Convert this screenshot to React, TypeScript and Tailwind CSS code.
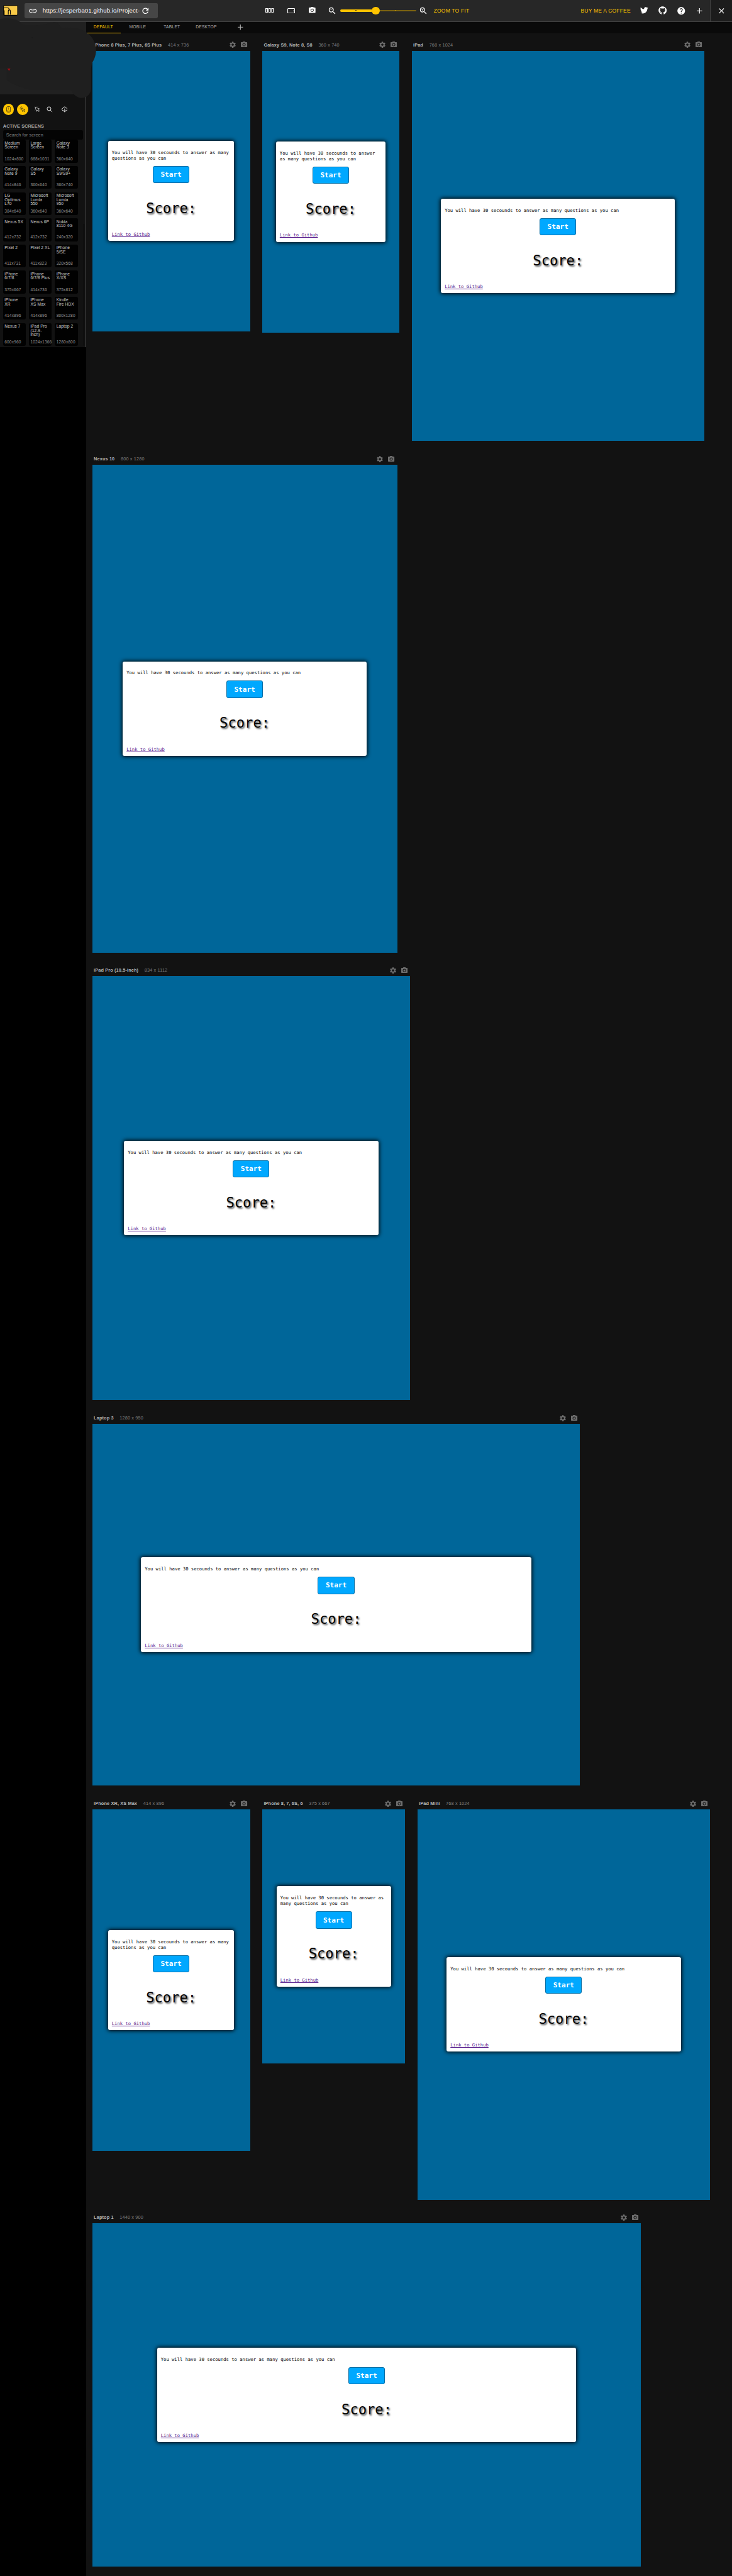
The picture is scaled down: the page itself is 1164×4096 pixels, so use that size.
import React from "react";
import { MdAdd, MdCameraAlt, MdClose, MdHelp, MdLink, MdRefresh, MdSettings, MdZoomIn, MdZoomOut } from "react-icons/md";
import { FaGithub, FaTwitter } from "react-icons/fa";

type Device = { name: string; w: number; h: number };

const DEVICE_ROWS: Device[][] = [
  [
    { name: "iPhone 8 Plus, 7 Plus, 6S Plus", w: 414, h: 736 },
    { name: "Galaxy S9, Note 8, S8", w: 360, h: 740 },
    { name: "iPad", w: 768, h: 1024 },
  ],
  [{ name: "Nexus 10", w: 800, h: 1280 }],
  [{ name: "iPad Pro (10.5-inch)", w: 834, h: 1112 }],
  [{ name: "Laptop 3", w: 1280, h: 950 }],
  [
    { name: "iPhone XR, XS Max", w: 414, h: 896 },
    { name: "iPhone 8, 7, 6S, 6", w: 375, h: 667 },
    { name: "iPad Mini", w: 768, h: 1024 },
  ],
  [{ name: "Laptop 1", w: 1440, h: 900 }],
];

const SCREENS: [string, string][] = [
  ["Medium Screen", "1024x800"],
  ["Large Screen", "688x1031"],
  ["Galaxy Note 3", "360x640"],
  ["Galaxy Note 9", "414x846"],
  ["Galaxy S5", "360x640"],
  ["Galaxy S9/S9+", "360x740"],
  ["LG Optimus L70", "384x640"],
  ["Microsoft Lumia 550", "360x640"],
  ["Microsoft Lumia 950", "360x640"],
  ["Nexus 5X", "412x732"],
  ["Nexus 6P", "412x732"],
  ["Nokia 8110 4G", "240x320"],
  ["Pixel 2", "411x731"],
  ["Pixel 2 XL", "411x823"],
  ["iPhone 5/SE", "320x568"],
  ["iPhone 6/7/8", "375x667"],
  ["iPhone 6/7/8 Plus", "414x736"],
  ["iPhone X/XS", "375x812"],
  ["iPhone XR", "414x896"],
  ["iPhone XS Max", "414x896"],
  ["Kindle Fire HDX", "800x1280"],
  ["Nexus 7", "600x960"],
  ["iPad Pro (12.9-inch)", "1024x1366"],
  ["Laptop 2", "1280x800"],
];

const TABS = ["DEFAULT", "MOBILE", "TABLET", "DESKTOP"];

const units = (n: number) => `calc(var(--spacing) * ${n})`;

function Logo() {
  return (
    <svg viewBox="0 0 39 28" preserveAspectRatio="none" className="ml-8 h-28 w-39 shrink-0" fill="none">
      <rect x="1" y="1" width="37" height="26" rx="2.500" fill="#f8c947" stroke="#0a0a0a" strokeWidth="2" />
      <path d="M2 7.500h10c2.500 0 3.500 1 3.500 4" stroke="#0a0a0a" strokeWidth="1.700" />
      <path d="M3 27V14" stroke="#0a0a0a" strokeWidth="1.700" />
      <path d="M13.500 25v-8c0-3 1-4.500 2.700-4.500s2.800 1.500 2.800 4.500v8" stroke="#0a0a0a" strokeWidth="1.900" />
    </svg>
  );
}

function Header() {
  return (
    <header className="flex h-57 shrink-0 items-center border-b border-[#434343] bg-[#272727] text-white">
      <Logo />
      <div className="ml-17 flex h-40 w-350 shrink-0 items-center rounded-[2.400px] bg-[#464646] pl-11">
        <MdLink className="size-24 shrink-0" />
        <span className="ml-13 w-257 text-[9.600px] tracking-[0.009em] whitespace-nowrap">
          https://jesperba01.github.io/Project-
        </span>
        <MdRefresh className="ml-1 size-24 shrink-0" />
      </div>
      <div className="ml-266 flex h-full items-center">
        <span className="flex w-56 justify-center">
          <svg viewBox="0 0 22 12" className="h-12 w-22" fill="none" stroke="currentColor" strokeWidth="2">
            <rect x="1" y="1" width="4.500" height="10" />
            <rect x="8.750" y="1" width="4.500" height="10" />
            <rect x="16.500" y="1" width="4.500" height="10" />
          </svg>
        </span>
        <span className="flex w-56 justify-center">
          <svg viewBox="0 0 20 14" className="h-14 w-20" fill="none" stroke="currentColor" strokeWidth="1.800">
            <rect x="0.900" y="0.900" width="18.200" height="12.200" rx="1.500" />
            <path d="M15 7h1.800" />
          </svg>
        </span>
        <span className="flex w-54 justify-center">
          <MdCameraAlt className="size-21" />
        </span>
        <MdZoomOut className="ml-14 size-24" />
        <div className="ml-8 flex w-200 items-center">
          <div className="flex h-6 w-84 items-center rounded-l-full bg-[#ffc400] pl-41">
            <span className="size-2 bg-[#5c4a10]" />
          </div>
          <span className="size-20 rounded-full bg-[#ffc400]" />
          <div className="flex h-4 w-96 items-center rounded-r-full bg-[#7c6311] pl-42">
            <span className="size-2 bg-[#ffc400]" />
          </div>
        </div>
        <MdZoomIn className="ml-7 size-24" />
        <span className="ml-15 text-[8.480px] tracking-[0.026em] whitespace-nowrap text-[#ffc400]">ZOOM TO FIT</span>
      </div>
      <div className="ml-auto flex h-full items-center">
        <span className="mr-12 text-[8.480px] tracking-[0.026em] whitespace-nowrap text-[#ffc400]">
          BUY ME A COFFEE
        </span>
        <span className="flex w-48 justify-center">
          <FaTwitter className="size-21" />
        </span>
        <span className="flex w-48 justify-center">
          <FaGithub className="size-22" />
        </span>
        <span className="flex w-48 justify-center">
          <MdHelp className="size-24" />
        </span>
        <span className="flex w-48 justify-center">
          <MdAdd className="size-24" />
        </span>
        <span className="ml-4 flex h-full w-58 items-center justify-center border-l border-[#434343] bg-[#1c1c1c]">
          <MdClose className="size-24" />
        </span>
      </div>
    </header>
  );
}

function Scribble() {
  return (
    <svg viewBox="0 0 260 260" className="absolute top-0 left-0 z-20 h-260 w-260">
      <path
        d="M0 50C20 46 50 48 57 64C90 70 120 64 140 59C155 57 158 70 162 74C190 70 215 76 228 86C244 97 252 115 252 131C252 147 246 158 241 166L239 180V231C239 246 228 257 214 257C200 257 192 246 186 236H80C50 228 30 220 18 210V180H0Z"
        fill="#1f1f1f"
      />
      <path d="M19 180h8.500l-3.500 6z" fill="#9c0d14" />
      <rect x="83.500" y="98" width="1.500" height="1.500" fill="#111" />
    </svg>
  );
}

function SidebarTools() {
  return (
    <div className="flex h-29 items-center text-[#eeeeee]">
      <span className="flex size-29 items-center justify-center rounded-full bg-[#ffc400]">
        <svg viewBox="0 0 12 16" className="h-16 w-12" fill="none" stroke="#1a1a1a" strokeWidth="1.200">
          <rect x="1" y="0.800" width="10" height="14.400" rx="3" />
          <path d="M6 3v6" strokeDasharray="1.500 1" />
          <path d="M3.500 10.500 6 12.500l2.500-2" />
        </svg>
      </span>
      <span className="ml-8 flex size-29 items-center justify-center rounded-full bg-[#ffc400]">
        <svg viewBox="0 0 16 16" className="size-16" fill="none" stroke="#1a1a1a" strokeWidth="1.100">
          <path d="M5 5l3 9 1.600-3 3.200 3.600 1.600-1.400-3.200-3.400 3-1.200z" />
          <path d="M0.800 5h2M2 1.500l1.500 1.700M5.500 0.500v2M9 1.500 7.800 3M2 8.500 3.300 7" />
        </svg>
      </span>
      <svg viewBox="0 0 16 16" className="ml-15 size-16" fill="none" stroke="currentColor" strokeWidth="1.200">
        <path d="M3.500 2.500l3 11 2.200-3.500 3.800 4 1.900-1.700-3.800-3.900 3.600-1.700z" />
        <path d="M1 11V1h11" stroke="#555" strokeWidth="0.800" strokeDasharray="1 1" />
      </svg>
      <svg viewBox="0 0 16 16" className="ml-18 size-16" fill="none" stroke="currentColor" strokeWidth="1.600">
        <circle cx="6.500" cy="6.500" r="5" />
        <path d="M10.200 10.200 15 15" />
      </svg>
      <svg viewBox="0 0 16 16" className="ml-22 size-16" fill="none" stroke="currentColor" strokeWidth="1.500">
        <path d="M5.500 11H4a3 3 0 0 1-.4-6A4.400 4.400 0 0 1 12 4.600 3.200 3.200 0 0 1 12 11h-1.500" />
        <path d="M8 6v9M5.500 12.700 8 15.200l2.500-2.500" />
      </svg>
    </div>
  );
}

function Sidebar() {
  return (
    <aside className="w-226 shrink-0 bg-black">
      <div className="h-190 bg-[#212121]" />
      <div className="flex h-664 flex-col border-r border-[#4a4a4a] bg-[#121212] pt-26 pl-8">
        <SidebarTools />
        <h2 className="mt-19 flex h-21 items-center text-[7.300px] font-bold tracking-[0.010em] text-[#a9a9a9]">
          ACTIVE SCREENS
        </h2>
        <div className="flex h-25 w-209 items-center rounded-[2.400px] bg-[#040404] pl-8 text-[7.270px] tracking-[0.015em] text-[#858585]">
          Search for screen
        </div>
        <div className="flex">
          <div className="grid w-209 grid-cols-[repeat(3,calc(var(--spacing)*60))] gap-8">
            {SCREENS.map(([name, size]) => (
              <div key={name} className="flex h-60 flex-col justify-between rounded-[2.400px] bg-[#010101] p-4">
                <span className="text-[6.670px] leading-[6.670px] tracking-[0.015em] text-[#cfcfcf]">{name}</span>
                <span className="text-[6.670px] leading-[6.670px] tracking-[0.015em] whitespace-nowrap text-[#949494]">
                  {size}
                </span>
              </div>
            ))}
          </div>
          <div className="mt-220 h-321 w-6 rounded-full bg-[#0e0e0e]" />
        </div>
      </div>
    </aside>
  );
}

function TabBar() {
  return (
    <nav className="flex h-30 bg-[#0a0a0a] text-[6.750px] tracking-[0.028em] text-[#b0b0b0]">
      {TABS.map((tab, i) => (
        <span
          key={tab}
          className={
            i === 0
              ? "flex w-90 items-center justify-center border-b border-[#ffc400] text-[#ffc400]"
              : "flex w-90 items-center justify-center"
          }
        >
          {tab}
        </span>
      ))}
      <span className="flex w-90 items-center justify-center">
        <MdAdd className="size-24" />
      </span>
    </nav>
  );
}

function QuizCard() {
  return (
    <div className="flex w-4/5 max-w-1100 flex-col rounded-[3px] bg-white p-10 font-['DejaVu_Sans_Mono',monospace] text-black shadow-[0_0_6px_1px_#000]">
      <p className="mt-13 text-[7.190px] leading-[9.090px]">
        You will have 30 secounds to answer as many questions as you can
      </p>
      <button className="mt-13 flex h-45 w-96 items-center justify-center self-center rounded-[3px] border border-[#006ca5] bg-[#00a8ff] text-[11.070px] font-bold text-white">
        Start
      </button>
      <p className="mt-42 flex h-47 items-center self-center text-[22.130px] [text-shadow:1.800px_1.800px_2.500px_rgba(0,0,0,0.7)]">
        Score:
      </p>
      <a className="mt-38 self-start text-[7.190px] leading-[9.090px] text-[#551a8b] underline">Link to Github</a>
    </div>
  );
}

function DeviceFrame({ device }: { device: Device }) {
  return (
    <section style={{ width: units(device.w) }}>
      <div className="flex h-30 items-center pl-4 text-[7.300px] tracking-[0.020em] whitespace-nowrap">
        <span className="font-bold text-[#b8b8b8]">{device.name}</span>
        <span className="ml-16 text-[#808080]">
          {device.w} x {device.h}
        </span>
        <MdSettings className="ml-auto size-20 text-[#6e6e6e]" />
        <MdCameraAlt className="mr-5 ml-10 size-20 text-[#6e6e6e]" />
      </div>
      <div className="flex items-center justify-center bg-[#006699]" style={{ height: units(device.h) }}>
        <QuizCard />
      </div>
    </section>
  );
}

export default function App() {
  return (
    <div className="flex h-[4096px] w-[1164px] flex-col overflow-hidden bg-[#121212] font-['Liberation_Sans',Arial,sans-serif] leading-none [--spacing:0.6061px]">
      <Header />
      <div className="flex grow">
        <Sidebar />
        <main className="grow">
          <TabBar />
          <div className="flex flex-col gap-32 pt-16 pl-16">
            {DEVICE_ROWS.map((row, i) => (
              <div key={i} className="flex items-start gap-32">
                {row.map((d) => (
                  <DeviceFrame key={d.name} device={d} />
                ))}
              </div>
            ))}
          </div>
        </main>
      </div>
      <Scribble />
    </div>
  );
}
